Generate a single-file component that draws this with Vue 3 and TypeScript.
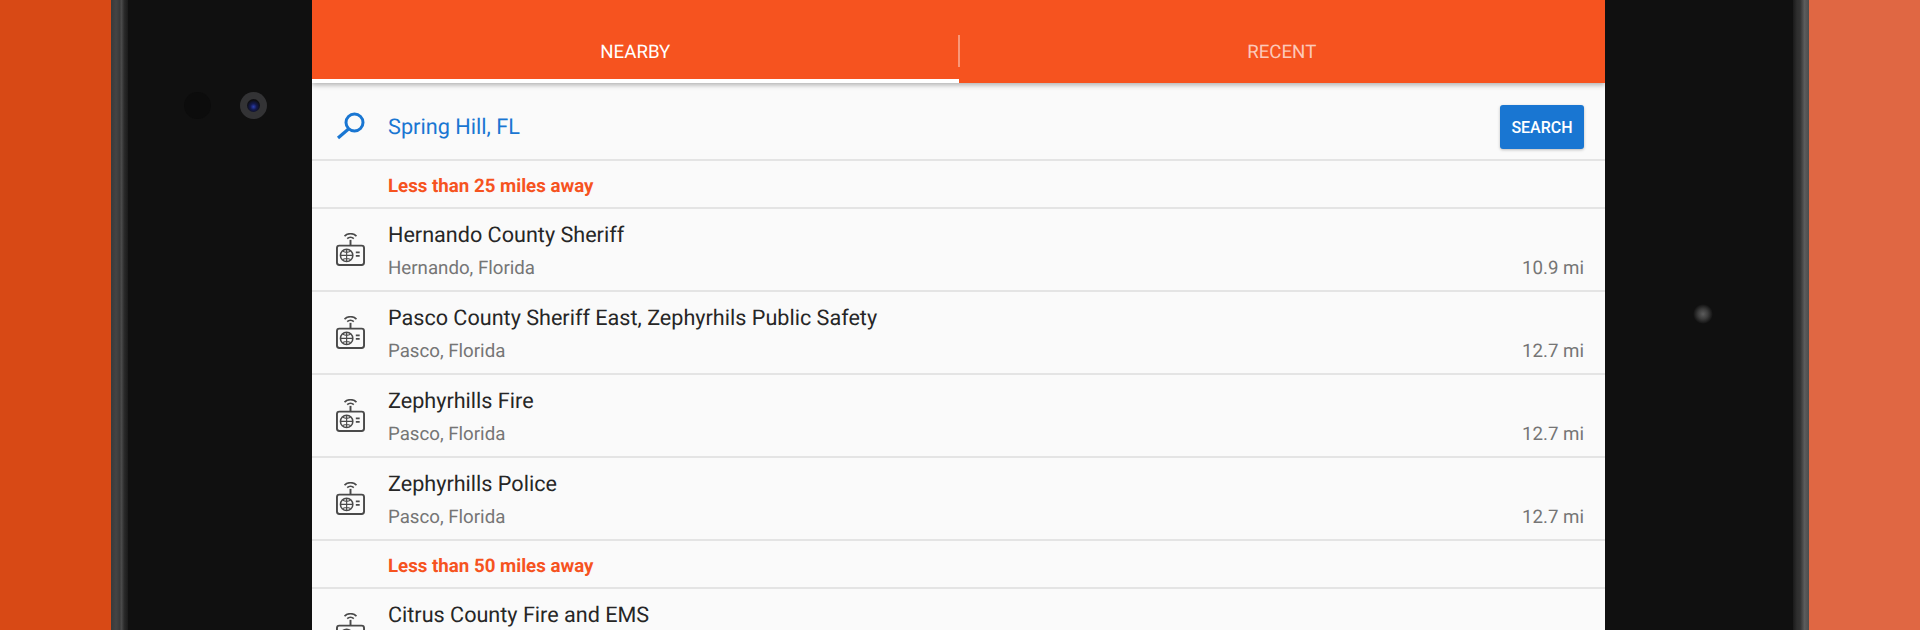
<script setup lang="ts">
interface Station {
  name: string
  place?: string
  distance?: string
}

interface Group {
  label: string
  stations: Station[]
}

const groups: Group[] = [
  {
    label: 'Less than 25 miles away',
    stations: [
      { name: 'Hernando County Sheriff', place: 'Hernando, Florida', distance: '10.9 mi' },
      { name: 'Pasco County Sheriff East, Zephyrhils Public Safety', place: 'Pasco, Florida', distance: '12.7 mi' },
      { name: 'Zephyrhills Fire', place: 'Pasco, Florida', distance: '12.7 mi' },
      { name: 'Zephyrhills Police', place: 'Pasco, Florida', distance: '12.7 mi' },
    ],
  },
  {
    label: 'Less than 50 miles away',
    // second line of this row falls below the fold
    stations: [{ name: 'Citrus County Fire and EMS' }],
  },
]
</script>

<template>
  <div class="page">
    <div class="side side-left" />
    <div class="frame frame-left" />
    <div class="bezel bezel-left">
      <span class="sensor" />
      <span class="camera"><span class="lens" /></span>
    </div>

    <main class="screen">
      <nav class="tabs">
        <div class="tab active">NEARBY</div>
        <div class="tab">RECENT</div>
      </nav>

      <div class="search">
        <svg class="search-icon" viewBox="0 0 30 30" fill="none" stroke="#1976d2">
          <circle cx="18.5" cy="11.5" r="8.5" stroke-width="3" />
          <path d="M12.5 18 2 27" stroke-width="3.2" />
        </svg>
        <span class="query">Spring Hill, FL</span>
        <button class="search-btn">SEARCH</button>
      </div>

      <section v-for="group in groups" :key="group.label">
        <h2 class="group-label">{{ group.label }}</h2>
        <div v-for="station in group.stations" :key="station.name" class="row">
          <svg class="radio" viewBox="0 0 30 34" fill="none" stroke="#4a4a4a">
            <rect x="1" y="12.5" width="28" height="20" rx="2.5" stroke-width="2" />
            <path d="M15 12.5V6.5" stroke-width="2" />
            <path d="M11.6 5.2a5 5 0 0 1 6.8 0M8.8 2.6a9 9 0 0 1 12.4 0" stroke-width="1.7" />
            <circle cx="11" cy="22.6" r="6.4" stroke-width="1.6" />
            <path d="M4.6 22.6h12.8M11 16.2v12.8M7 18.4a9 9 0 0 0 8 0M7 26.8a9 9 0 0 1 8 0" stroke-width="1.2" />
            <path d="M20.5 19.5h4M20.5 23h4" stroke-width="1.8" />
          </svg>
          <div class="info">
            <div class="name">{{ station.name }}</div>
            <div v-if="station.place" class="meta">
              <span>{{ station.place }}</span>
              <span>{{ station.distance }}</span>
            </div>
          </div>
        </div>
      </section>
    </main>

    <div class="bezel bezel-right">
      <span class="light" />
    </div>
    <div class="frame frame-right" />
    <div class="side side-right" />
  </div>
</template>

<style scoped>
.page {
  display: flex;
  width: 1920px;
  height: 630px;
  overflow: hidden;
  font-family: Roboto, "Liberation Sans", sans-serif;
  text-rendering: geometricPrecision;
}

.side {
  width: 111px;
  flex: none;
}

.side-left {
  background: #d84915;
}

.side-right {
  background: #e06743;
}

.frame {
  width: 17px;
  flex: none;
}

.frame-left {
  background: linear-gradient(90deg, #3a3a3a 0, #444 30%, #3a3a3a 50%, #4a4a4a 62%, #2a2a2a 78%, #1a1a1a 100%);
}

.frame-right {
  width: 16px;
  background: linear-gradient(90deg, #1a1a1a 0, #2e2e2e 25%, #333 45%, #5c5c5c 72%, #4c4c4c 100%);
}

.bezel {
  position: relative;
  flex: none;
  background: #101010;
}

.bezel-left {
  width: 184px;
}

.bezel-right {
  width: 188px;
}

.sensor {
  position: absolute;
  left: 56px;
  top: 92px;
  width: 27px;
  height: 27px;
  border-radius: 50%;
  background: #0c0c0c;
}

.camera {
  position: absolute;
  left: 112px;
  top: 92px;
  width: 27px;
  height: 27px;
  border-radius: 50%;
  background: #333335;
  display: flex;
  align-items: center;
  justify-content: center;
}

.lens {
  width: 13px;
  height: 13px;
  border-radius: 50%;
  background: radial-gradient(circle at 50% 60%, #2b3fb0 0, #141a50 30%, #0e0e12 65%);
}

.light {
  position: absolute;
  left: 88px;
  top: 304px;
  width: 20px;
  height: 20px;
  border-radius: 50%;
  background: radial-gradient(circle, #5c5c5c 0, #3c3c3c 35%, rgba(16, 16, 16, 0) 70%);
}

.screen {
  flex: none;
  width: 1293px;
  height: 630px;
  overflow: hidden;
  background: #fafafa;
}

.tabs {
  position: relative;
  display: flex;
  height: 83px;
  background: #f6531f;
  box-shadow: 0 2px 5px rgba(0, 0, 0, 0.3);
}

.tab {
  position: relative;
  flex: 1;
  padding-top: 42px;
  text-align: center;
  font-size: 18.7px;
  line-height: 21px;
  color: rgba(255, 255, 255, 0.7);
}

.tab.active {
  color: #fff;
  box-shadow: inset 0 -4px 0 #fff;
}

.tab.active::after {
  content: "";
  position: absolute;
  right: -1px;
  top: 35px;
  width: 2px;
  height: 32px;
  background: rgba(255, 255, 255, 0.4);
}

.search {
  display: flex;
  align-items: center;
  height: 78px;
  border-bottom: 2px solid #e4e4e4;
  box-sizing: border-box;
  padding: 9px 21px 0 24px;
}

.search-icon {
  width: 30px;
  height: 30px;
  flex: none;
}

.query {
  flex: 1;
  margin: 4px 0 0 22px;
  font-size: 21.7px;
  color: #1976d2;
}

.search-btn {
  width: 84px;
  height: 44px;
  margin-top: 2px;
  border: 0;
  border-radius: 3px;
  padding: 1px 0 0;
  background: #1976d2;
  color: #fff;
  font: 500 16px Roboto, sans-serif;
  box-shadow: 0 1px 3px rgba(0, 0, 0, 0.25);
}

.group-label {
  margin: 0;
  height: 48px;
  box-sizing: border-box;
  padding-left: 76px;
  border-bottom: 2px solid #e4e4e4;
  font-size: 18.7px;
  font-weight: 700;
  line-height: 50px;
  color: #f6531f;
}

.row {
  display: flex;
  height: 83px;
  box-sizing: border-box;
  border-bottom: 2px solid #e4e4e4;
  padding: 0 21px 0 24px;
}

.radio {
  width: 29px;
  height: 34px;
  flex: none;
  margin-top: 24px;
}

.info {
  flex: 1;
  margin-left: 23px;
  padding-top: 15px;
}

.name {
  font-size: 21.6px;
  line-height: 24px;
  color: #262626;
}

.meta {
  display: flex;
  justify-content: space-between;
  margin-top: 8px;
  font-size: 18.7px;
  line-height: 24px;
  color: #757575;
}
</style>

<style>
html,
body {
  margin: 0;
  background: #101010;
}
</style>
